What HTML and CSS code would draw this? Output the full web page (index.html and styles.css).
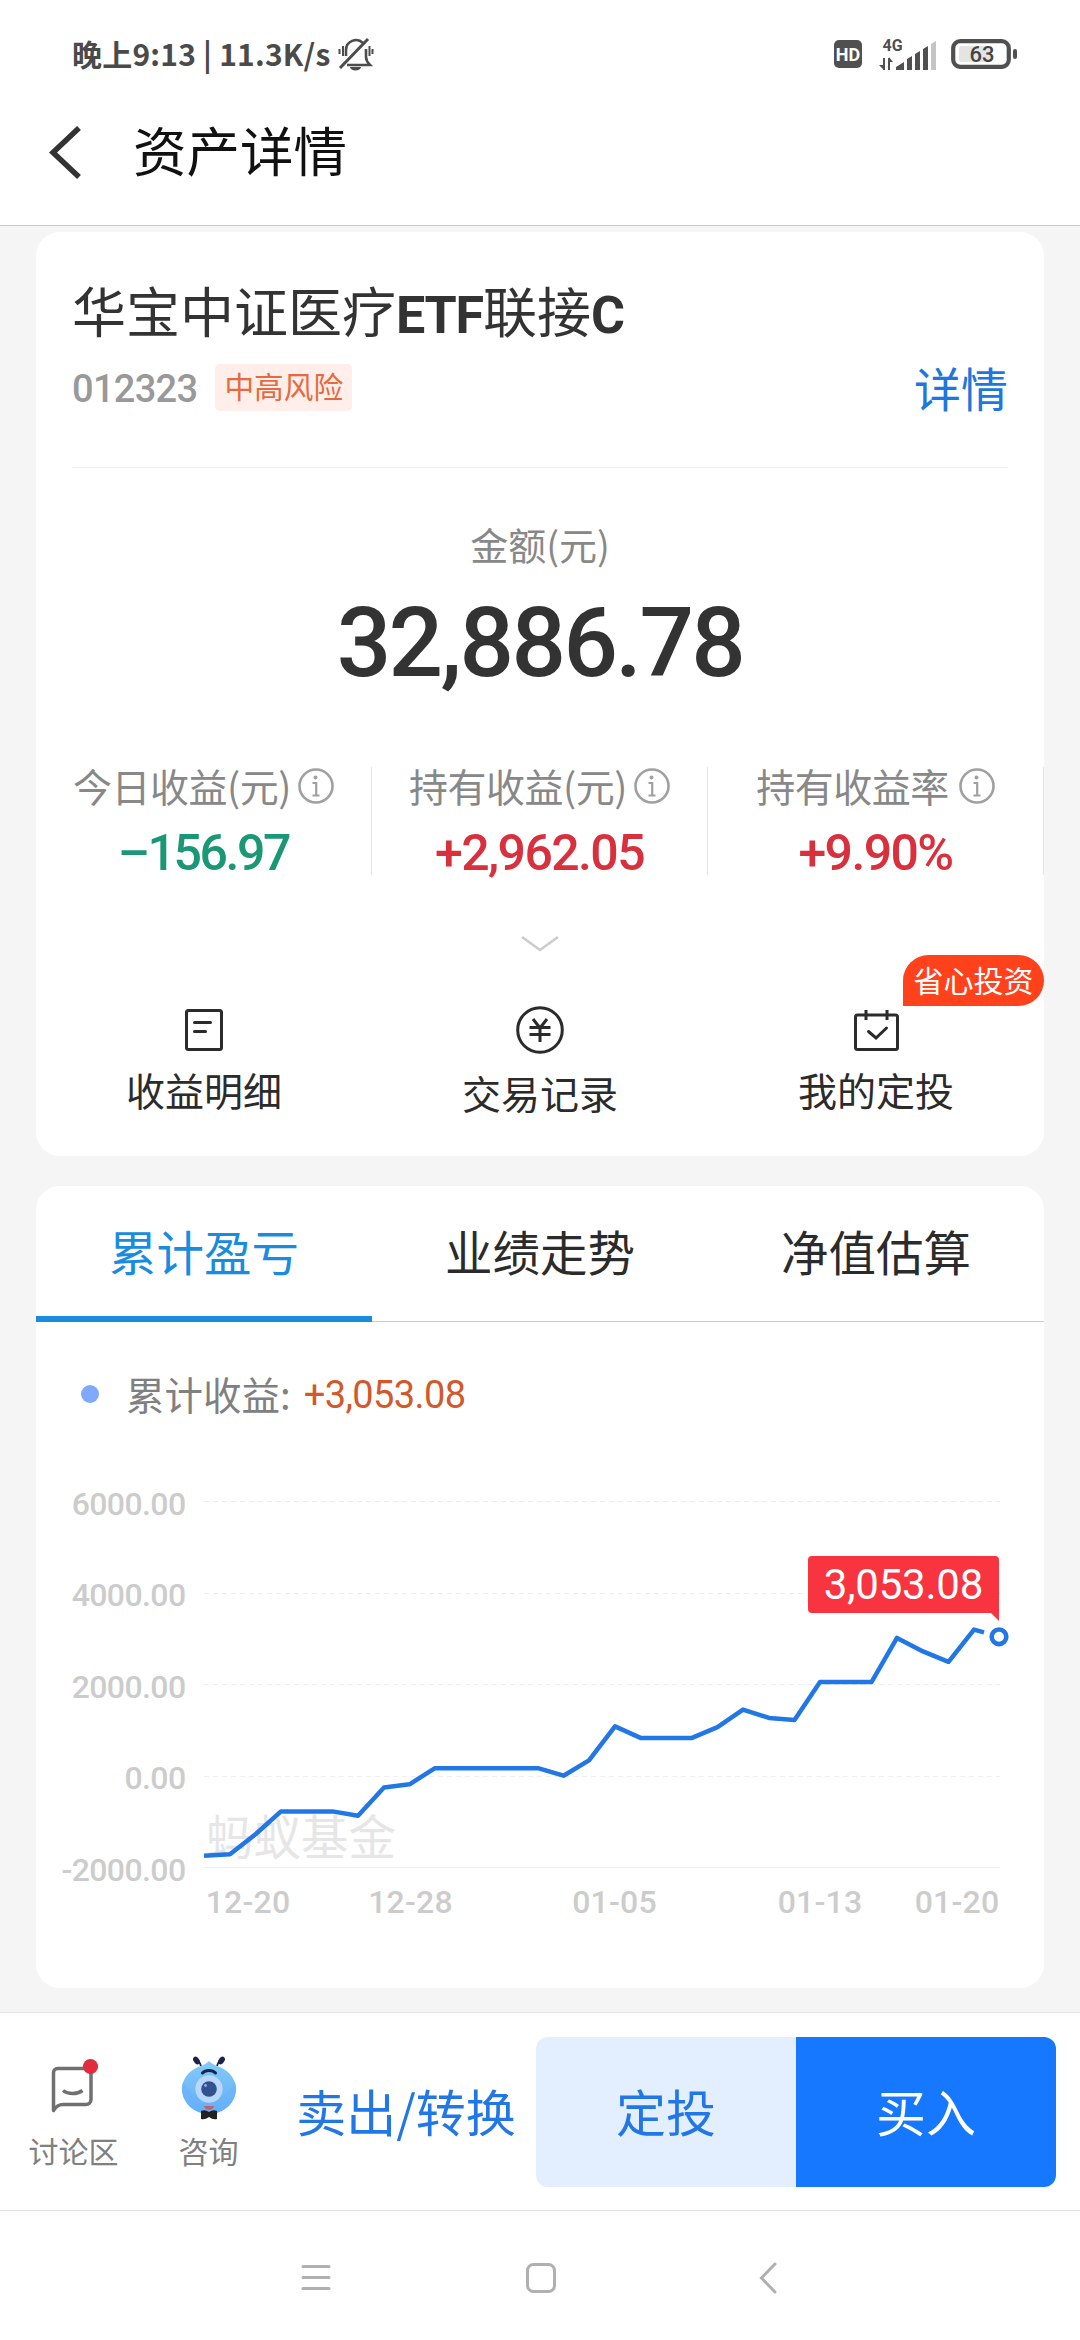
FILE: index.html
```html
<!DOCTYPE html>
<html lang="zh-CN">
  <head>
    <meta charset="UTF-8" />
    <title>资产详情</title>
    <link rel="stylesheet" href="styles.css">
  </head>
  <body>
    <div class="statusbar">
      <span class="status-text">晚上9:13 | 11.3K/s</span>
      <svg class="bell" width="36" height="34" viewBox="0 0 36 34" fill="none" stroke="#4c4c4c" stroke-width="2.6">
        <path d="M8 19v-6a10 10 0 0 1 17-7M28 12v8c0 4 2 6 4 8H9" />
        <path d="M2 31L30 2" stroke-width="3" />
        <path d="M1.500 12v5M5 9v10M31.500 9v10M34.500 12v5" stroke-width="2" />
        <path d="M12 30h11a5.500 3.500 0 0 1-11 0z" fill="#4c4c4c" stroke="none" />
      </svg>
      <div class="status-icons">
        <span class="hd">HD</span>
        <svg class="signal" width="58" height="34" viewBox="0 0 58 34" fill="#505050">
          <text x="3.500" y="14" class="net">4G</text>
          <path d="M4 33v-12h2v12zM5 33l-5-5h5zM9 21h2v12h-2zM10 20l4 5h-4z" />
          <path d="M17 33v-3l8-5v8zM28 33V22l5-3v14zM36 33V17l5-3v19zM44 33V12l5-3v24z" />
          <path d="M52 33V7l5-3v29z" fill="#c4c4c4" />
        </svg>
        <svg class="battery" width="68" height="30" viewBox="0 0 68 30">
          <rect x="8" y="7" width="33" height="16" rx="2" fill="#e4e4e4" />
          <rect x="2.200" y="2.200" width="55.600" height="25.600" rx="7" fill="none" stroke="#505050" stroke-width="4.200" />
          <rect x="62" y="10" width="4" height="10" rx="2" fill="#505050" />
          <text x="31" y="23" text-anchor="middle" class="level">63</text>
        </svg>
      </div>
    </div>

    <header class="header">
      <svg class="back" width="34" height="56" viewBox="0 0 34 56" fill="none" stroke="#333" stroke-width="5.500">
        <path d="M31 3L5 27.500 31 52" />
      </svg>
      <h1>资产详情</h1>
    </header>

    <main>
      <section class="card">
        <div class="fund">
          <h2>华宝中证医疗<b>ETF</b>联接<b>C</b></h2>
          <div class="meta">
            <span class="code">012323</span>
            <span class="risk">中高风险</span>
            <a class="detail">详情</a>
          </div>
        </div>

        <div class="amount-label">金额(元)</div>
        <div class="amount">32,886.78</div>

        <div class="stats">
          <div class="stat">
            <div class="stat-label">今日收益(元)<svg class="info" viewBox="0 0 36 36"><use href="#info" /></svg></div>
            <div class="stat-value down">–156.97</div>
          </div>
          <div class="stat">
            <div class="stat-label">持有收益(元)<svg class="info" viewBox="0 0 36 36"><use href="#info" /></svg></div>
            <div class="stat-value">+2,962.05</div>
          </div>
          <div class="stat">
            <div class="stat-label">持有收益率<svg class="info wide" viewBox="0 0 36 36"><use href="#info" /></svg></div>
            <div class="stat-value">+9.90%</div>
          </div>
        </div>

        <svg class="expand" width="40" height="16" viewBox="0 0 40 16" fill="none" stroke="#ccc" stroke-width="2.500">
          <path d="M2 1l18 13L38 1" />
        </svg>

        <div class="actions">
          <div class="action">
            <svg width="48" height="48" viewBox="0 0 48 48" fill="none" stroke="#2b2b2b" stroke-width="3">
              <rect x="6.500" y="4.500" width="35" height="39" rx="2" />
              <path d="M14.500 16.500h16M14.500 25.500h11" stroke-linecap="round" />
            </svg>
            <span>收益明细</span>
          </div>
          <div class="action middle">
            <svg width="48" height="48" viewBox="0 0 48 48" fill="none" stroke="#2b2b2b" stroke-width="3">
              <circle cx="24" cy="24" r="22.300" />
              <path d="M17 13l7 9 7-9M13.500 21.500h21M13.500 28.500h21M24 21v15" />
            </svg>
            <span>交易记录</span>
          </div>
          <div class="action">
            <svg width="48" height="48" viewBox="0 0 48 48" fill="none" stroke="#2b2b2b" stroke-width="3">
              <rect x="3.500" y="9" width="42" height="34.500" rx="2" />
              <path d="M14 4v10M35 4v10" />
              <path d="M16.500 25.500l7.500 6.500 10.500-10" stroke-linecap="round" />
            </svg>
            <span>我的定投</span>
            <em class="badge">省心投资</em>
          </div>
        </div>
      </section>

      <section class="card chart-card">
        <div class="tabs">
          <div class="tab active">累计盈亏</div>
          <div class="tab">业绩走势</div>
          <div class="tab">净值估算</div>
        </div>
        <div class="legend">
          <i class="dot"></i>
          <span>累计收益:</span>
          <b>+3,053.08</b>
        </div>
        <svg class="chart" width="1008" height="548" viewBox="36 1440 1008 548">
          <g class="grid">
            <path d="M204 1501.500h796M204 1593.500h796M204 1684.500h796M204 1776.500h796" stroke-dasharray="5 4" />
            <path d="M204 1867.500h796" />
          </g>
          <g class="axis" text-anchor="end">
            <text x="185.500" y="1514.500">6000.00</text>
            <text x="185.500" y="1606">4000.00</text>
            <text x="185.500" y="1697.500">2000.00</text>
            <text x="185.500" y="1789">0.00</text>
            <text x="185.500" y="1880.500">-2000.00</text>
          </g>
          <g class="axis dates" text-anchor="middle">
            <text x="248" y="1913">12-20</text>
            <text x="410.500" y="1913">12-28</text>
            <text x="614.500" y="1913">01-05</text>
            <text x="820" y="1913">01-13</text>
            <text x="957" y="1913">01-20</text>
          </g>
          <text x="206" y="1855" class="watermark">蚂蚁基金</text>
          <polyline class="line" points="204,1855.700 230,1854.300 255.500,1834.300 281,1811.400 332.500,1811.400 358,1815.700 384,1787.500 409.500,1784.300 435,1768.200 538,1768.200 563.500,1775.700 589,1760.400 615,1726.400 640.500,1737.900 692,1737.900 717.500,1727.100 743,1709.600 769,1717.900 794.500,1720 820,1682.100 871.500,1682.100 897,1637.900 923,1651.400 948.500,1661.800 974,1629.600 984,1632.400" />
          <circle cx="999" cy="1636.800" r="7.300" fill="#fff" stroke="#2277e6" stroke-width="4.600" />
          <path d="M812 1556h183a4 4 0 0 1 4 4v61l-8-8H812a4 4 0 0 1-4-4v-49a4 4 0 0 1 4-4z" fill="#f73440" />
          <text x="903.500" y="1598.500" text-anchor="middle" class="tip">3,053.08</text>
        </svg>
      </section>
    </main>

    <footer class="toolbar">
      <div class="tool">
        <svg width="56" height="64" viewBox="0 0 56 64" fill="none" stroke="#707070" stroke-width="3.500">
          <path d="M12 12.500h29a4 4 0 0 1 4 4v27a5 5 0 0 1-5 5H17c-5 0-7 2-9.500 6V16.500a4 4 0 0 1 4-4z" stroke-linejoin="round" />
          <path d="M17 34.500c5 4 14 4 19.500 0" />
          <circle cx="44.500" cy="10.500" r="7.600" fill="#e02c3c" stroke="none" />
        </svg>
        <span>讨论区</span>
      </div>
      <div class="tool">
        <svg width="56" height="64" viewBox="0 0 56 64">
          <defs>
            <linearGradient id="body" x1="0" y1="0" x2="0" y2="1">
              <stop offset="0" stop-color="#83cbf8" />
              <stop offset="1" stop-color="#62adf8" />
            </linearGradient>
          </defs>
          <path d="M20 10c-1-4-3-5-4-7M36 10c1-4 3-5 4-7" stroke="#1b2347" stroke-width="1.800" fill="none" />
          <ellipse cx="15.500" cy="4.500" rx="2.800" ry="4.200" transform="rotate(-38 15.500 4.500)" fill="#1b2347" />
          <ellipse cx="40.500" cy="4.500" rx="2.800" ry="4.200" transform="rotate(38 40.500 4.500)" fill="#1b2347" />
          <path d="M28 5c3 3 6 4 11 6 9 4 16 12 16 22 0 14-12 25-27 25S1 47 1 33c0-10 7-18 16-22 5-2 8-3 11-6z" fill="url(#body)" />
          <path d="M2 26c-3 8 0 15 4 19 5 2 10 1 14-1-8-4-13-10-18-18zM54 26c3 8 0 15-4 19-5 2-10 1-14-1 8-4 13-10 18-18z" fill="#6db2f8" opacity=".6" />
          <circle cx="28" cy="33" r="13.700" fill="#b9d6fc" />
          <circle cx="28" cy="33" r="7.800" fill="#33508f" />
          <circle cx="24.500" cy="29.500" r="1.400" fill="#8fb0e8" />
          <path d="M21.500 17c3-3.500 10-3.500 13 0" stroke="#14284e" stroke-width="3" fill="none" stroke-linecap="round" />
          <path d="M23 50h10c-1 5-9 5-10 0z" fill="#c75e68" />
          <path d="M20 55q4-2 8 1 4-3 8-1v8q-4 1-8-2-4 3-8 2z" fill="#222" />
        </svg>
        <span>咨询</span>
      </div>
      <a class="sell">卖出/转换</a>
      <a class="btn plan">定投</a>
      <a class="btn buy">买入</a>
    </footer>

    <nav class="sysnav">
      <svg width="30" height="32" viewBox="0 0 30 32" fill="none" stroke="#b0b0b0" stroke-width="3" stroke-linecap="round">
        <path d="M2 4.500h26M2 15.500h26M2 26.500h26" />
      </svg>
      <svg class="home" width="32" height="32" viewBox="0 0 32 32" fill="none" stroke="#b0b0b0" stroke-width="3">
        <rect x="2.500" y="2.500" width="27" height="27" rx="6" />
      </svg>
      <svg width="18" height="32" viewBox="0 0 18 32" fill="none" stroke="#b0b0b0" stroke-width="3" stroke-linecap="round">
        <path d="M16 2L2.500 16 16 30" />
      </svg>
    </nav>

    <svg class="symbols" width="0" height="0">
      <symbol id="info" viewBox="0 0 36 36">
        <circle cx="18" cy="18" r="16.500" fill="none" stroke="#a0a0a0" stroke-width="2.600" />
        <circle cx="17.500" cy="9.500" r="2" fill="#a0a0a0" />
        <path d="M14.500 15h3.700v12M14.500 27.500h7" fill="none" stroke="#a0a0a0" stroke-width="2.200" />
      </symbol>
    </svg>
  </body>
</html>
```
FILE: styles.css
```css
* {
  box-sizing: border-box;
}
body {
  margin: 0;
  width: 1080px;
  height: 2340px;
  display: flex;
  flex-direction: column;
  background: #f5f5f5;
  color: #2b2b2b;
  font-family: "Noto Sans CJK SC", sans-serif;
  position: relative;
  overflow: hidden;
}
h1,
h2 {
  margin: 0;
  font-weight: 400;
}
svg {
  display: block;
  flex: none;
}
.symbols {
  position: absolute;
}

/* status bar */
.statusbar {
  height: 80px;
  padding: 28px 61px 0 72px;
  display: flex;
  align-items: center;
  background: #fff;
  color: #4a4a4a;
}
.status-text {
  width: 259px;
  font-size: 30px;
  line-height: 46px;
  font-weight: 700;
  letter-spacing: 0.2px;
  margin-top: -2px;
  white-space: pre;
}
.bell {
  margin-left: 7px;
}
.status-icons {
  margin-left: auto;
  display: flex;
  align-items: center;
}
.hd {
  width: 28px;
  height: 28px;
  border-radius: 5px;
  background: #505050;
  color: #fff;
  font: 700 18px/30px Roboto, sans-serif;
  text-align: center;
}
.signal {
  margin-left: 17px;
}
.battery {
  margin-left: 14px;
}
.net {
  font: 700 16px Roboto, sans-serif;
}
.level {
  font: 500 22px Roboto, sans-serif;
  fill: #444;
}

/* title bar */
.header {
  height: 146px;
  padding-left: 48px;
  display: flex;
  align-items: center;
  background: #fff;
  border-bottom: 1px solid #c8cac8;
}
.header h1 {
  margin: -7px 0 0 51px;
  font-size: 53.5px;
  line-height: 60px;
  color: #111;
}

main {
  flex: 1;
  padding: 6px 36px 0;
}
.card {
  background: #fff;
  border-radius: 24px;
}

/* fund summary */
.fund {
  margin: 0 36px;
  padding-top: 46px;
  border-bottom: 1px solid #eee;
}
.fund h2 {
  font-size: 54px;
  line-height: 64px;
  height: 64px;
  color: #333;
}
.fund h2 b {
  font: 700 52px/1 Roboto, sans-serif;
  letter-spacing: -1.2px;
}
.meta {
  height: 64px;
  margin: 13px 0 48px;
  display: flex;
  align-items: center;
}
.code {
  padding-top: 5px;
  font: 500 38px/59px Roboto, sans-serif;
  letter-spacing: -0.7px;
  color: #999;
}
.risk {
  height: 47px;
  margin-left: 18px;
  padding: 0 9px;
  border-radius: 5px;
  background: #ffeee9;
  color: #e56a3f;
  font-size: 29.7px;
  line-height: 44px;
}
.detail {
  margin-left: auto;
  font-size: 47px;
  line-height: 62px;
  color: #1d77dc;
}
.amount-label {
  margin-top: 56px;
  font-size: 38px;
  line-height: 40px;
  text-align: center;
  color: #888;
}
.amount {
  margin-top: 34px;
  font: 500 96px/90px Roboto, sans-serif;
  letter-spacing: -2.6px;
  text-align: center;
  color: #333;
}
.stats {
  display: flex;
  height: 108px;
  margin-top: 79px;
}
.stat {
  flex: 1;
  border-right: 1px solid #e5e5e5;
}
.stat-label {
  display: flex;
  justify-content: center;
  height: 36px;
  font-size: 39px;
  line-height: 36px;
  letter-spacing: -0.5px;
  color: #888;
}
.info {
  width: 36px;
  height: 36px;
  margin: 1px 0 0 7px;
}
.info.wide {
  margin-left: 10px;
}
.stat-value {
  margin-top: 26px;
  font: 500 50px/48px Roboto, sans-serif;
  letter-spacing: -1.6px;
  text-align: center;
  color: #d9303e;
}
.stat-value.down {
  letter-spacing: -2.4px;
  color: #1a9774;
}
.expand {
  margin: 61px auto 54px;
}
.actions {
  display: flex;
  align-items: flex-start;
  padding-bottom: 44px;
}
.action {
  position: relative;
  flex: 1;
  display: flex;
  flex-direction: column;
  align-items: center;
  gap: 15px;
  font-size: 39px;
  line-height: 40px;
}
.action.middle {
  gap: 18px;
}
.badge {
  position: absolute;
  top: -51px;
  right: 0;
  width: 141px;
  height: 51px;
  border-radius: 26px 26px 26px 0;
  background: #ff411c;
  color: #fff;
  font-size: 30px;
  line-height: 49px;
  font-style: normal;
  text-align: center;
}

/* profit chart */
.chart-card {
  margin-top: 30px;
}
.tabs {
  display: flex;
  height: 136px;
  border-bottom: 1px solid #ccc;
}
.tab {
  flex: 1;
  height: 136px;
  font-size: 47.5px;
  line-height: 129px;
  text-align: center;
}
.tab.active {
  color: #1a8ce0;
  box-shadow: inset 0 -6px #1a8ce0;
}
.legend {
  display: flex;
  align-items: center;
  height: 40px;
  margin: 52px 0 26px 45px;
  font-size: 38.5px;
  line-height: 36px;
  color: #808080;
}
.legend span {
  margin-top: -3px;
}
.dot {
  width: 18px;
  height: 18px;
  margin-right: 27px;
  border-radius: 50%;
  background: #7fa9ff;
}
.legend b {
  margin: 2px 0 0 13px;
  font: 400 38px/40px Roboto, sans-serif;
  letter-spacing: -0.6px;
  color: #d1592b;
}
.grid path {
  fill: none;
  stroke: #eee;
}
.axis {
  font: 500 32px Roboto, sans-serif;
  letter-spacing: -0.6px;
  fill: #ccc;
}
.dates {
  letter-spacing: 0.2px;
}
.watermark {
  font-size: 47.5px;
  fill: #e6e6e6;
}
.line {
  fill: none;
  stroke: #2277e6;
  stroke-width: 4.5;
  stroke-linejoin: round;
}
.tip {
  font: 400 42px Roboto, sans-serif;
  letter-spacing: -0.2px;
  fill: #fff;
}

/* bottom toolbar */
.toolbar {
  height: 199px;
  padding: 0 24px 0 6px;
  display: flex;
  align-items: center;
  background: #fff;
  border-top: 1px solid #e4e4e4;
  border-bottom: 1px solid #e0e0e0;
}
.tool {
  width: 135px;
  display: flex;
  flex-direction: column;
  align-items: center;
  gap: 12px;
  font-size: 30px;
  line-height: 36px;
  color: #808080;
}
.sell,
.btn {
  width: 260px;
  height: 150px;
  font-size: 50px;
  line-height: 146px;
  text-align: center;
  white-space: nowrap;
  color: #2277e6;
}
.plan {
  border-radius: 12px 0 0 12px;
  background: #e3eeff;
}
.buy {
  border-radius: 0 12px 12px 0;
  background: #1677ff;
  color: #fff;
}

/* system navigation */
.sysnav {
  height: 129px;
  padding: 5px 303px 0 301px;
  display: flex;
  align-items: center;
  justify-content: space-between;
  background: #fff;
}
.home {
  margin-right: 8px;
}
```
